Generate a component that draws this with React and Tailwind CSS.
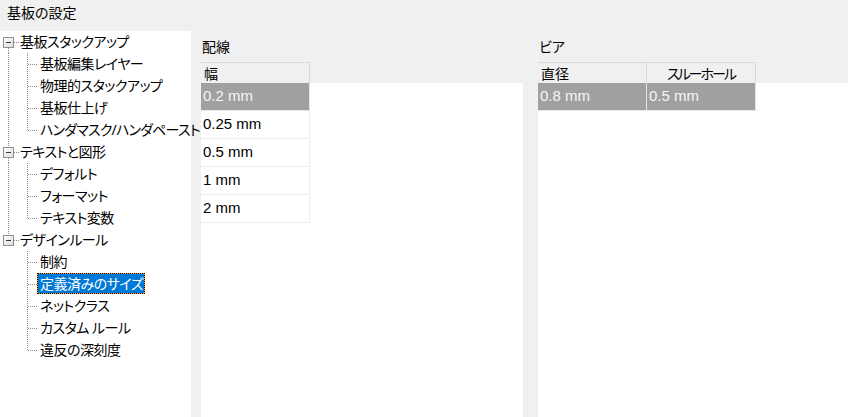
import React from "react";

const tree = [
  { label: "基板スタックアップ", children: ["基板編集レイヤー", "物理的スタックアップ", "基板仕上げ", "ハンダマスク/ハンダペースト"] },
  { label: "テキストと図形", children: ["デフォルト", "フォーマット", "テキスト変数"] },
  { label: "デザインルール", children: ["制約", "定義済みのサイズ", "ネットクラス", "カスタム ルール", "違反の深刻度"] },
];

const DOT = "#8c8c8c";

function ParentLines({ first, last }) {
  return (
    <svg width="20" height="22" className="shrink-0" shapeRendering="crispEdges">
      {!first && <line x1="8.5" y1="0" x2="8.5" y2="6" stroke={DOT} strokeDasharray="1 1" />}
      {!last && <line x1="8.5" y1="17" x2="8.5" y2="22" stroke={DOT} strokeDasharray="1 1" />}
      <line x1="14" y1="11.5" x2="20" y2="11.5" stroke={DOT} strokeDasharray="1 1" />
      <defs>
        <linearGradient id="bx" x1="0" y1="0" x2="1" y2="1">
          <stop offset="0" stopColor="#ffffff" />
          <stop offset="1" stopColor="#dcdcdc" />
        </linearGradient>
      </defs>
      <rect x="3.5" y="6.5" width="10" height="10" fill="url(#bx)" stroke="#8f8f8f" />
      <line x1="6" y1="11.5" x2="11" y2="11.5" stroke="#2b3a55" />
    </svg>
  );
}

function ChildLines({ parentLast, lastChild }) {
  return (
    <svg width="37" height="22" className="shrink-0" shapeRendering="crispEdges">
      {!parentLast && <line x1="8.5" y1="0" x2="8.5" y2="22" stroke={DOT} strokeDasharray="1 1" />}
      <line x1="27.5" y1="0" x2="27.5" y2={lastChild ? 12 : 22} stroke={DOT} strokeDasharray="1 1" />
      <line x1="28" y1="11.5" x2="37" y2="11.5" stroke={DOT} strokeDasharray="1 1" />
    </svg>
  );
}

function Tree() {
  return (
    <div className="w-[191px] bg-white flex flex-col tracking-[-0.5px]">
      {tree.map((p, pi) => (
        <React.Fragment key={p.label}>
          <div className="h-[22px] flex items-start">
            <ParentLines first={pi === 0} last={pi === tree.length - 1} />
            <span className="h-[21px] leading-[21px] whitespace-nowrap">{p.label}</span>
          </div>
          {p.children.map((c, ci) => {
            const sel = c === "定義済みのサイズ";
            const long = c.length > 12;
            return (
              <div key={c} className="h-[22px] flex items-start">
                <ChildLines parentLast={pi === tree.length - 1} lastChild={ci === p.children.length - 1} />
                {sel ? (
                  <span className="h-[21px] border border-dotted border-black bg-[#f2a23a] flex">
                    <span className="bg-[#0078d7] text-white pl-[2px] pr-[1px] leading-[19px] whitespace-nowrap">{c}</span>
                  </span>
                ) : (
                  <span
                    className={`h-[21px] border border-transparent pl-[2px] leading-[19px] whitespace-nowrap ${
                      long ? "tracking-[-0.8px]" : ""
                    }`}
                  >
                    {c}
                  </span>
                )}
              </div>
            );
          })}
        </React.Fragment>
      ))}
    </div>
  );
}

function Panel({ label, cols, rows, widthClass }) {
  return (
    <div className={`${widthClass} flex flex-col`}>
      <div className="h-[31px] flex items-center pl-[1px]">{label}</div>
      <div className="flex h-[21px]">
        {cols.map((c) => (
          <div
            key={c.t}
            className={`w-[109px] h-[21px] border-t border-r border-[#d9d9d9] flex items-center ${
              c.center ? "justify-center tracking-[-2px]" : "pl-[3px]"
            }`}
          >
            {c.t}
          </div>
        ))}
      </div>
      <div className="flex-1 bg-white flex flex-col">
        {rows.map((r, ri) => (
          <div key={ri} className="flex">
            {r.map((v, vi) => (
              <div
                key={vi}
                style={{ fontFamily: '"Liberation Sans", Arial, sans-serif' }}
                className={`w-[109px] h-[28px] border-b border-r flex items-center pl-[2px] text-[15px] ${
                  ri === 0 ? "bg-[#a0a0a0] text-[#f6f6f6] border-[#e6e6e6]" : "border-[#ececec] text-black"
                }`}
              >
                {v}
              </div>
            ))}
          </div>
        ))}
      </div>
    </div>
  );
}

export default function App() {
  return (
    <div
      className="w-[848px] h-[417px] bg-[#f0f0f0] flex flex-col text-[14px] text-black overflow-hidden [font-feature-settings:'palt']"
      style={{ fontFamily: '"Noto Sans", "Noto Sans CJK JP", sans-serif' }}
    >
      <div className="h-[31px] pl-[7px] pt-[4px] leading-[18px]">基板の設定</div>
      <div className="flex flex-1 min-h-0">
        <Tree />
        <div className="w-[10px]" />
        <Panel
          label="配線"
          widthClass="w-[322px]"
          cols={[{ t: "幅" }]}
          rows={[["0.2 mm"], ["0.25 mm"], ["0.5 mm"], ["1 mm"], ["2 mm"]]}
        />
        <div className="w-[15px]" />
        <Panel
          label="ビア"
          widthClass="w-[310px]"
          cols={[{ t: "直径" }, { t: "スルーホール", center: true }]}
          rows={[["0.8 mm", "0.5 mm"]]}
        />
      </div>
    </div>
  );
}
